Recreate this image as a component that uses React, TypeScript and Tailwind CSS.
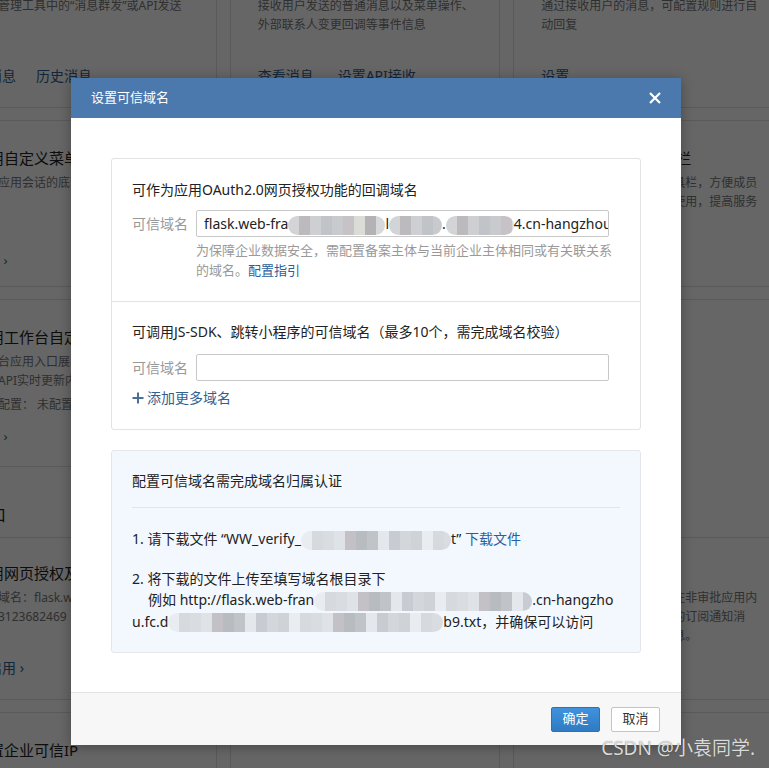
import type { ReactNode } from 'react'

const GRAY = ['#bdbabd', '#c8cacd', '#b5b2b6', '#d2d4d6', '#c0c3c7', '#dbdcd8', '#b9bcc1', '#cdcfd2', '#c6c2c5', '#d7d8da']
const BLUE = ['#d3d7dc', '#c0c3c8', '#dfe3e8', '#e9edf1', '#c8ccd2', '#b8bbc0', '#d9dde2', '#cfd3d8', '#e4e8ec', '#c4c1c6', '#d6dadf']

// pixelated "privacy" blur used in the screenshot
function Mosaic({ w, tone = 'gray' }: { w: number; tone?: 'gray' | 'blue' }) {
  const colors = tone === 'blue' ? BLUE : GRAY
  const n = Math.ceil(w / 11)
  return (
    <span
      className="inline-flex h-[19px] shrink-0 overflow-hidden rounded-full align-middle blur-[0.6px]"
      style={{ width: w }}
    >
      {Array.from({ length: n }).map((_, i) => (
        <span key={i} className="h-full w-[11px] shrink-0" style={{ background: colors[(i * 7 + 3) % colors.length] }} />
      ))}
    </span>
  )
}

function Card({ className, children }: { className: string; children?: ReactNode }) {
  return <div className={`shrink-0 border border-[#e1e1e1] bg-white ${className}`}>{children}</div>
}

const H = 'whitespace-nowrap text-[15px] leading-[22px] text-[#222]'
const D = 'whitespace-nowrap text-[12px] leading-[19px] text-[#777]'
const L = 'whitespace-nowrap text-[14px] leading-[20px] text-[#34608f]'

function Background() {
  return (
    <div className="-ml-[54px] grid w-[838px] grid-cols-3 gap-x-[13px]">
      {/* column 1 */}
      <div className="flex flex-col gap-[12px]">
        <Card className="-mt-[20px] h-[128px] px-[27px] pt-[15px]">
          <div className={D}>通过管理工具中的“消息群发”或API发送</div>
          <div className={D}>&nbsp;</div>
          <div className={`mt-[32px] flex gap-[20px] ${L}`}>
            <span>发消息</span>
            <span>历史消息</span>
          </div>
        </Card>
        <Card className="h-[167px] px-[27px] pt-[26px]">
          <div className={H}>应用自定义菜单</div>
          <div className={`mt-[4px] ${D}`}>设置应用会话的底部菜单，方便成员使用</div>
          <div className={D}>&nbsp;</div>
          <div className="mt-[39px] whitespace-nowrap text-[13px] leading-[20px] text-[#34608f]">设置 ›</div>
        </Card>
        <Card className="flex h-[401px] flex-col">
          <div className="h-[166px] px-[27px] pt-[26px]">
            <div className={H}>应用工作台自定义展示</div>
            <div className={`mt-[4px] ${D}`}>工作台应用入口展示自定义内容</div>
            <div className={D}>通过API实时更新内容</div>
            <div className={`mt-[5px] ${D}`}>当前配置： 未配置</div>
            <div className="mt-[12px] whitespace-nowrap text-[13px] leading-[20px] text-[#34608f]">设置 ›</div>
          </div>
          <div className="h-[71px] border-t border-[#e1e1e1] px-[27px] pt-[37px]">
            <div className="whitespace-nowrap text-[16px] leading-[22px] text-[#222]">入口</div>
          </div>
          <div className="flex-1 border-t border-[#e1e1e1] px-[27px] pt-[24px]">
            <div className={H}>应用网页授权及JS-SDK</div>
            <div className={`mt-[4px] ${D}`}>可信域名：flask.web-framework</div>
            <div className={D}>编号3123682469</div>
            <div className={`mt-[32px] ${L}`}>已启用 ›</div>
          </div>
        </Card>
        <Card className="h-[100px] px-[27px] pt-[26px]">
          <div className={H}>设置企业可信IP</div>
        </Card>
      </div>

      {/* column 2 */}
      <div className="flex flex-col gap-[12px]">
        <Card className="-mt-[20px] h-[128px] px-[27px] pt-[15px]">
          <div className={D}>接收用户发送的普通消息以及菜单操作、</div>
          <div className={D}>外部联系人变更回调等事件信息</div>
          <div className={`mt-[32px] flex gap-[24px] ${L}`}>
            <span>查看消息</span>
            <span>设置API接收</span>
          </div>
        </Card>
        <Card className="h-[700px]" />
      </div>

      {/* column 3 */}
      <div className="flex flex-col gap-[12px]">
        <Card className="-mt-[20px] h-[128px] px-[27px] pt-[15px]">
          <div className={D}>通过接收用户的消息，可配置规则进行自</div>
          <div className={D}>动回复</div>
          <div className={`mt-[32px] ${L}`}>设置</div>
        </Card>
        <Card className="h-[167px] px-[27px] pt-[26px]">
          <div className={H}>应用的聊天会话工具栏</div>
          <div className={`mt-[4px] ${D}`}>可将应用配置于会话的工具栏，方便成员</div>
          <div className={D}>在会话中能更快速便捷地使用，提高服务</div>
        </Card>
        <Card className="flex h-[401px] flex-col">
          <div className="h-[237px] px-[27px] pt-[26px]">
            <div className={H}>审批</div>
          </div>
          <div className="flex-1 border-t border-[#e1e1e1] px-[27px] pt-[24px]">
            <div className={H}>审批状态通知</div>
            <div className={`mt-[4px] ${D}`}>可向成员推送审批状态，在非审批应用内</div>
            <div className={D}>接收审批单据状态变更后的订阅通知消</div>
            <div className={D}>同时支持第三方应用的消息。</div>
          </div>
        </Card>
        <Card className="h-[100px]" />
      </div>
    </div>
  )
}

function Field({ children }: { children?: ReactNode }) {
  return (
    <div className="flex items-center">
      <span className="w-[64px] shrink-0 text-[14px] leading-[20px] text-[#999]">可信域名</span>
      <div className="h-[27px] w-[413px] overflow-hidden whitespace-nowrap rounded-[2px] border border-[#c9c9c9] bg-white pl-[7px] text-[14px] leading-[25px] text-[#222]">
        {children}
      </div>
    </div>
  )
}

function Modal() {
  return (
    <div className="absolute left-[71px] top-[78px] w-[610px] bg-white shadow-[0_2px_12px_rgba(0,0,0,0.3)]">
      <div className="flex h-[40px] items-center justify-between bg-[#4b78ad] px-[20px]">
        <span className="text-[13px] text-white">设置可信域名</span>
        <svg width="12" height="12" viewBox="0 0 12 12" fill="none">
          <path d="M1 1L11 11M11 1L1 11" stroke="white" strokeWidth="2.2" />
        </svg>
      </div>

      <div className="h-[574px] px-[40px] pt-[40px]">
        <div className="rounded-[3px] border border-[#e3e3e3]">
          <div className="px-[20px] pb-[21px] pt-[21px]">
            <div className="text-[14px] leading-[20px] text-[#222]">可作为应用OAuth2.0网页授权功能的回调域名</div>
            <div className="mt-[10px]">
              <Field>
                flask.web-fra<Mosaic w={97} />l<Mosaic w={53} />.<Mosaic w={68} />4.cn-hangzhou.fc.devsapp.net
              </Field>
            </div>
            <div className="ml-[64px] mt-[3px] w-[420px] text-[13px] leading-[20px] text-[#999]">
              为保障企业数据安全，需配置备案主体与当前企业主体相同或有关联关系的域名。
              <span className="text-[#2a5f9d]">配置指引</span>
            </div>
          </div>
          <div className="border-t border-[#e3e3e3] px-[20px] pb-[21px] pt-[20px]">
            <div className="text-[14px] leading-[20px] text-[#222]">
              可调用JS-SDK、跳转小程序的可信域名（最多10个，需完成域名校验）
            </div>
            <div className="mt-[12px]">
              <Field />
            </div>
            <div className="mt-[7px] flex items-center gap-[3px] text-[14px] leading-[20px] text-[#35608e]">
              <svg width="12" height="12" viewBox="0 0 12 12" fill="none">
                <path d="M6 0.5V11.5M0.5 6H11.5" stroke="#4a6f96" strokeWidth="2" />
              </svg>
              <span>添加更多域名</span>
            </div>
          </div>
        </div>

        <div className="mt-[20px] rounded-[3px] border border-[#e3e7ec] bg-[#f3f8fe] px-[20px] pb-[20px] pt-[20px] text-[14px] text-[#222]">
          <div className="leading-[20px]">配置可信域名需完成域名归属认证</div>
          <div className="mt-[16px] border-t border-[#e2e6ea]" />
          <div className="mt-[21px] whitespace-nowrap leading-[20px]">
            1. 请下载文件 “WW_verify_<Mosaic w={150} tone="blue" />t” <span className="text-[#2a5f9d]">下载文件</span>
          </div>
          <div className="mt-[18px] whitespace-nowrap leading-[21px]">
            <div>2. 将下载的文件上传至填写域名根目录下</div>
            <div className="pl-[16px]">
              例如 http://flask.web-fran<Mosaic w={218} tone="blue" />.cn-hangzho
            </div>
            <div>
              u.fc.d<Mosaic w={275} tone="blue" />b9.txt，并确保可以访问
            </div>
          </div>
        </div>
      </div>

      <div className="flex h-[53px] items-center justify-end gap-[11px] border-t border-[#e3e3e3] bg-[#f7f7f7] pr-[21px]">
        <button className="h-[25px] w-[49px] rounded-[2px] border border-[#2b73b8] bg-gradient-to-b from-[#3f92dc] to-[#2f7bc4] text-[13px] text-white">
          确定
        </button>
        <button className="h-[25px] w-[49px] rounded-[2px] border border-[#c4c4c4] bg-white text-[13px] text-[#333]">
          取消
        </button>
      </div>
    </div>
  )
}

export default function App() {
  return (
    <div className="relative h-[768px] w-full overflow-hidden bg-white font-['Noto_Sans','Noto_Sans_CJK_SC',sans-serif]">
      <Background />
      <div className="absolute inset-0 bg-black/60" />
      <Modal />
      <div className="absolute bottom-[8px] right-[14px] whitespace-nowrap text-[19px] leading-[24px] text-[#dadada] [text-shadow:0_0_1px_rgba(0,0,0,0.4)]">
        CSDN @小袁同学.
      </div>
    </div>
  )
}
